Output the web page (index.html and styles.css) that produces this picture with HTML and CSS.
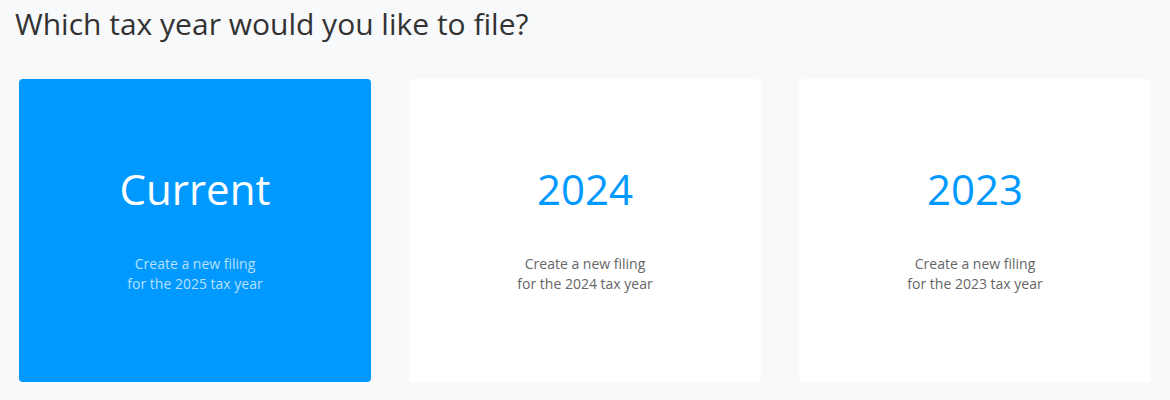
FILE: index.html
```html
<!DOCTYPE html>
<html lang="en">
<head>
  <meta charset="UTF-8" />
  <meta name="viewport" content="width=device-width, initial-scale=1" />
  <title>Choose Tax Year</title>
  <link rel="stylesheet" href="styles.css">
</head>
<body>
  <div class="page">
    <h1>Which tax year would you like to file?</h1>
    <div class="years">
      <a class="year-card active" href="#">
        <div class="year">Current</div>
        <div class="desc">Create a new filing<br>for the 2025 tax year</div>
      </a>
      <a class="year-card" href="#">
        <div class="year">2024</div>
        <div class="desc">Create a new filing<br>for the 2024 tax year</div>
      </a>
      <a class="year-card" href="#">
        <div class="year">2023</div>
        <div class="desc">Create a new filing<br>for the 2023 tax year</div>
      </a>
    </div>
  </div>
</body>
</html>
```

FILE: styles.css
```css
body {
  font-family: 'Open Sans', sans-serif;
  margin: 0;
  background: #f8f9fb;
  color: #333;
}
.page {
  padding: 0 19px;
}
h1 {
  font-size: 30px;
  font-weight: 400;
  margin: 0 0 0 -4px;
  padding-top: 4px;
  line-height: 40px;
  color: #333;
}
.years {
  display: grid;
  grid-template-columns: repeat(3, 1fr);
  gap: 38px;
  margin-top: 35px;
}
.year-card {
  display: flex;
  flex-direction: column;
  align-items: center;
  height: 303px;
  background: #fff;
  border-radius: 4px;
  text-decoration: none;
  text-align: center;
}
.year {
  margin-top: 82px;
  font-size: 42px;
  line-height: 56px;
  color: #0099ff;
}
.desc {
  margin-top: 37px;
  font-size: 14px;
  line-height: 20px;
  color: #666;
}
.year-card.active {
  background: #0099ff;
}
.year-card.active .year {
  color: #fff;
}
.year-card.active .desc {
  color: rgba(255, 255, 255, 0.72);
}
```
